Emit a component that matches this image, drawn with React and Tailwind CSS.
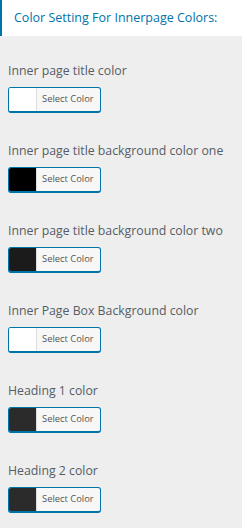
import React from "react";

const fields = [
  { label: "Inner page title color", color: "#ffffff" },
  { label: "Inner page title background color one", color: "#000000" },
  { label: "Inner page title background color two", color: "#1b1b1b" },
  { label: "Inner Page Box Background color", color: "#ffffff" },
  { label: "Heading 1 color", color: "#2b2b2b" },
  { label: "Heading 2 color", color: "#2b2b2b" },
];

const ColorButton = ({ color }) => (
  <button
    type="button"
    className="flex h-[26px] w-[93px] items-stretch overflow-hidden rounded-[3px] border border-b-2 border-[#0073aa] bg-[#f7f7f7] p-0"
  >
    <span className="w-[28px] border-r border-[#dddddd]" style={{ background: color }}></span>
    <span className="flex flex-1 items-center pl-[5px] text-[9.4px] text-[#555555]">
      Select Color
    </span>
  </button>
);

export default function App() {
  return (
    <div className="min-h-[528px] w-[242px] bg-[#eeeeee] font-['Open_Sans',sans-serif]">
      <div className="flex h-[36px] items-center border-l-2 border-[#0073aa] bg-white pl-[12px]">
        <h3 className="text-[12.5px] leading-[18px] text-[#0073aa]">
          Color Setting For Innerpage Colors:
        </h3>
      </div>
      <div className="flex flex-col gap-[29px] px-[8px] pt-[26px]">
        {fields.map((f) => (
          <div key={f.label} className="flex flex-col gap-[7px]">
            <label className="text-[12.3px] leading-[18px] text-[#555d66]">{f.label}</label>
            <ColorButton color={f.color} />
          </div>
        ))}
      </div>
    </div>
  );
}
